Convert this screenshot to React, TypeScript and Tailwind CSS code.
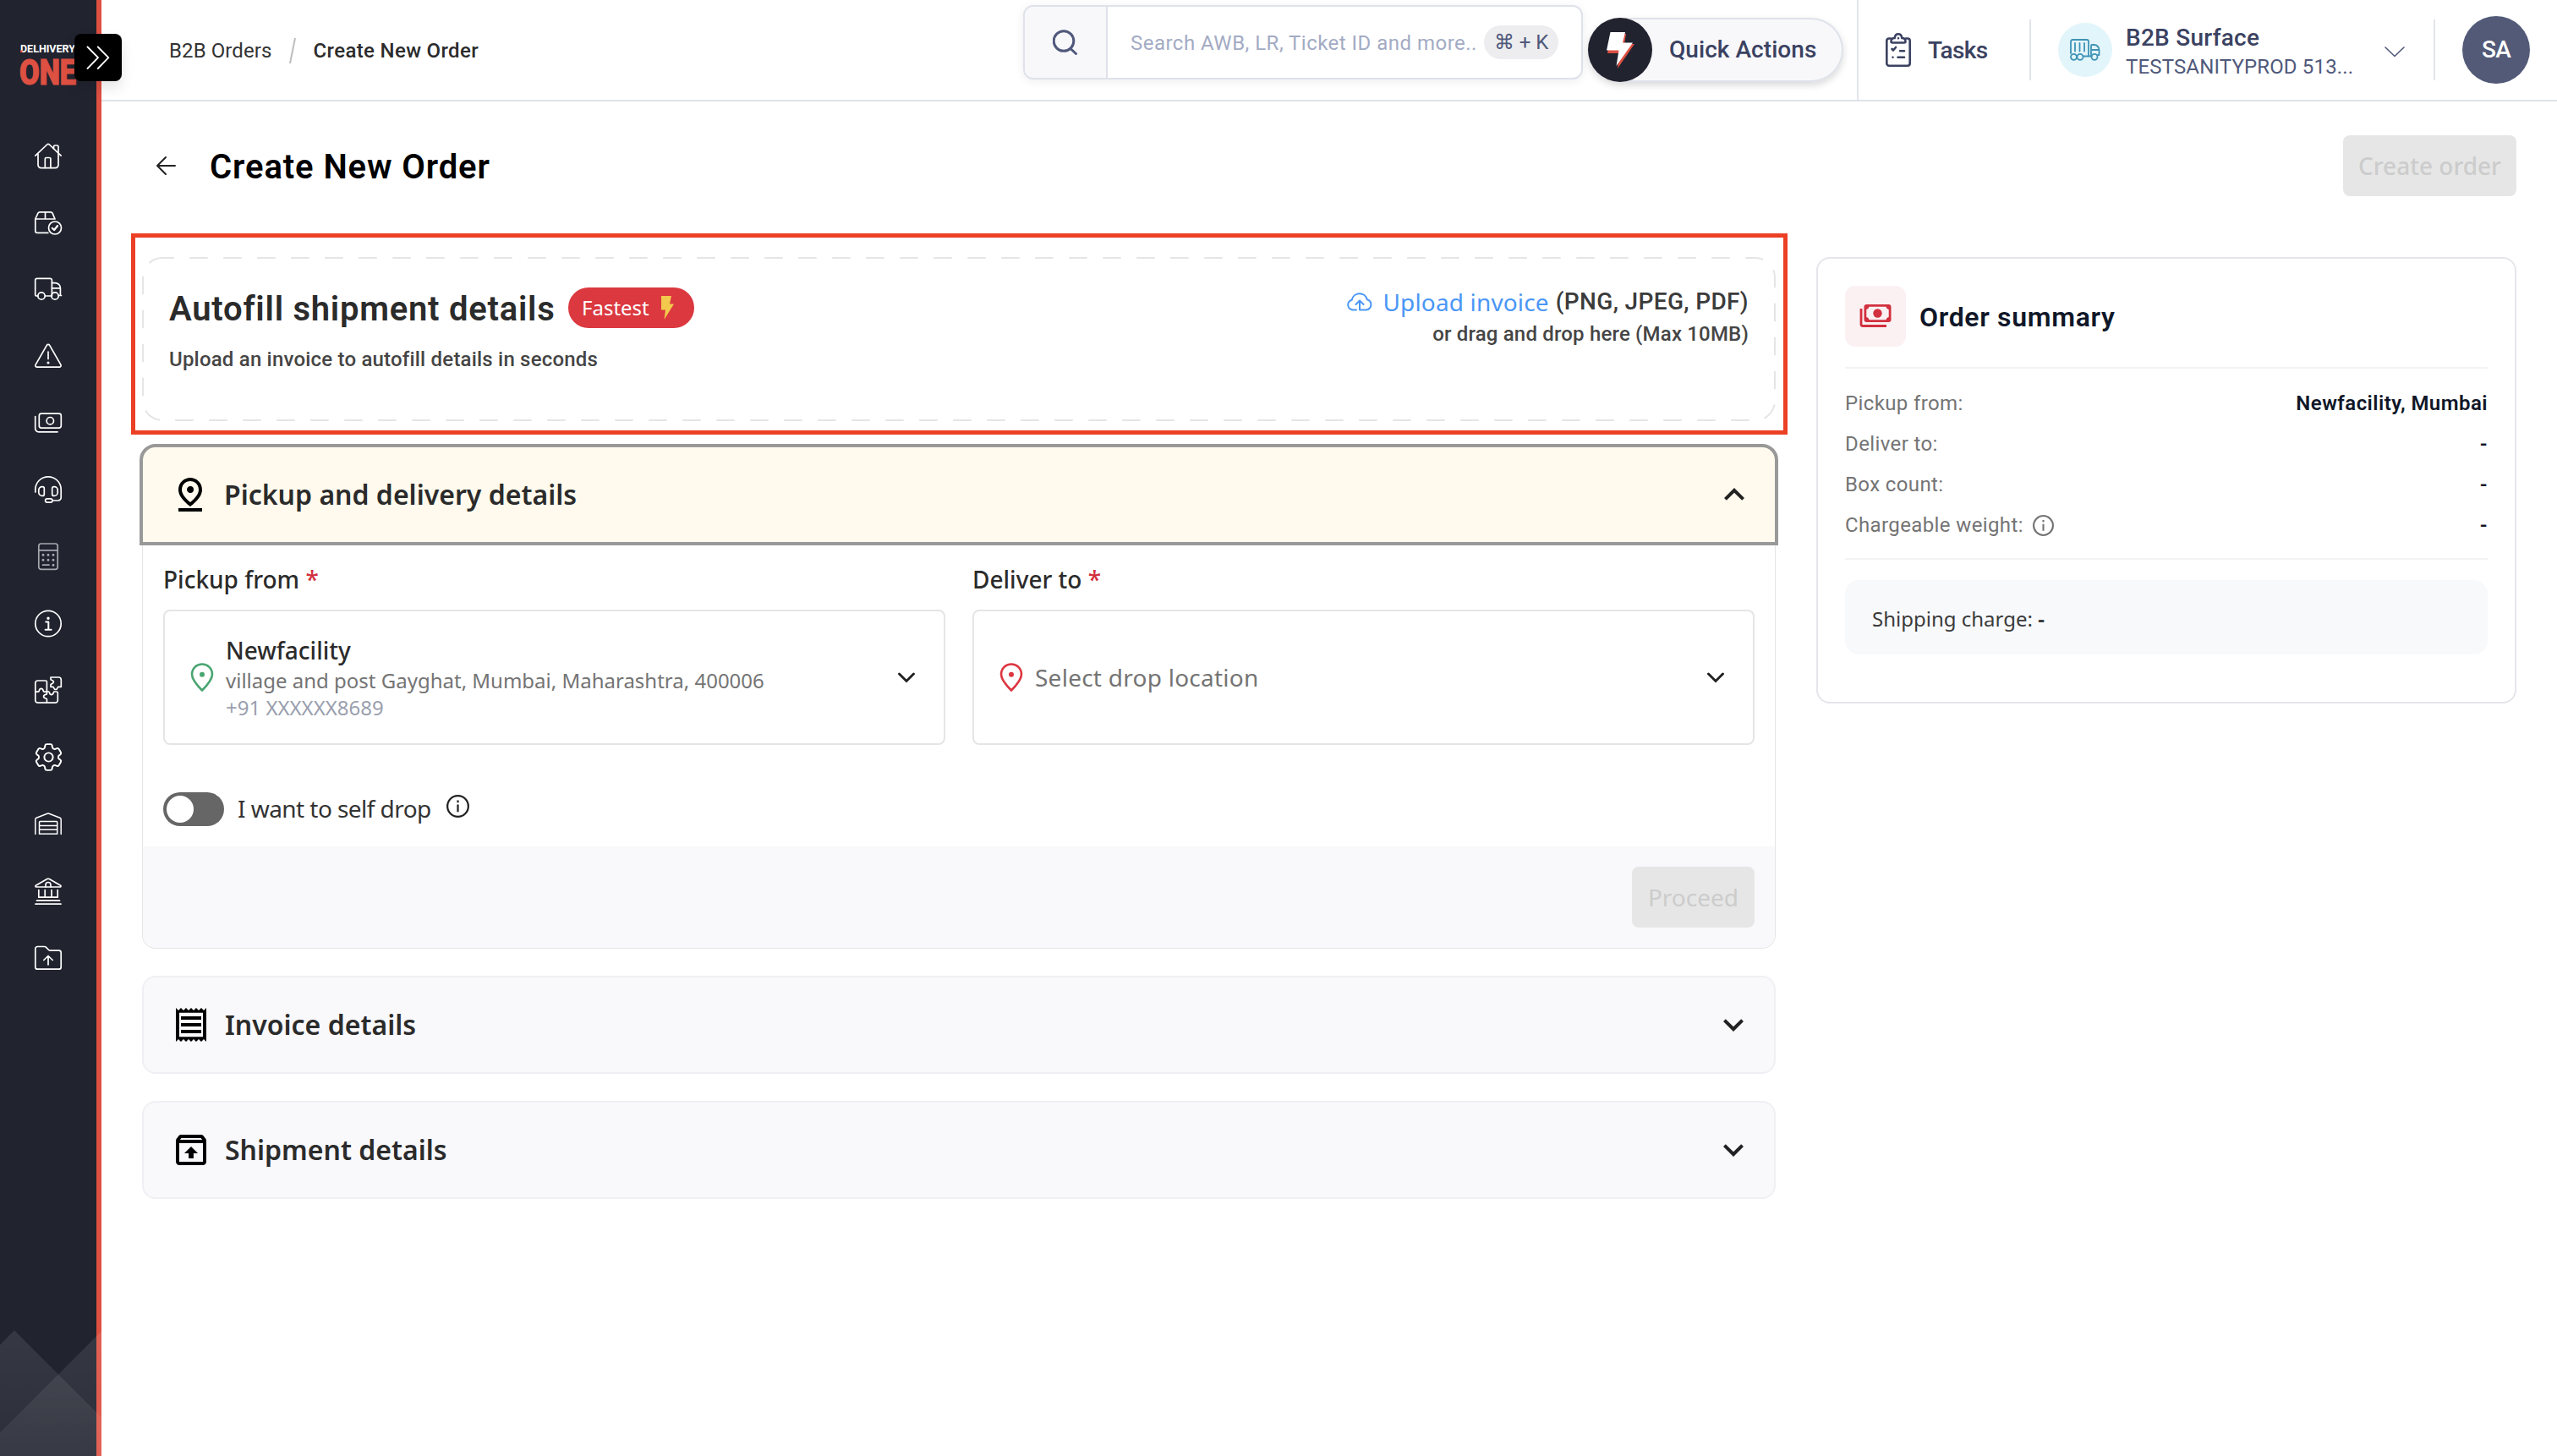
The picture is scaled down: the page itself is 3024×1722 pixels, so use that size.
import type { ReactNode } from "react";
import {
  MdExpandLess,
  MdExpandMore,
  MdOutlinePinDrop,
  MdOutlineReceipt,
  MdOutlineUnarchive,
} from "react-icons/md";
import { HiOutlineCog6Tooth } from "react-icons/hi2";

const roboto = "font-['Roboto','Noto_Sans',sans-serif]";

function NavIcon({ children, className = "text-white" }: { children: ReactNode; className?: string }) {
  return (
    <svg
      viewBox="0 0 32 32"
      className={`h-8 w-8 overflow-visible ${className}`}
      fill="none"
      stroke="currentColor"
      strokeWidth="1.7"
      strokeLinecap="round"
      strokeLinejoin="round"
    >
      {children}
    </svg>
  );
}

const navItems: ReactNode[] = [
  <NavIcon>
    <path d="M.8 16.2 14.6 3a2 2 0 0 1 2.8 0l13.8 13.2" />
    <path d="M4 14v13a3.6 3.6 0 0 0 3.6 3.6h16.8A3.6 3.6 0 0 0 28 27V13.5M28 13V5.5a1.5 1.5 0 0 0-1.500-1.500H24a1.500 1.500 0 0 0-1.500 1.500V8" />
    <path d="M12.300 30.500V20a1.500 1.500 0 0 1 1.500-1.500h3.600a1.500 1.500 0 0 1 1.500 1.500v10.500" />
  </NavIcon>,
  <NavIcon>
    <path d="M.8 12 3.900 5.200A2.400 2.400 0 0 1 6.100 3.800h12.800a2.400 2.400 0 0 1 2.200 1.400L24 12H.8ZM12.500 4v8" />
    <path d="M.8 12v14a2.400 2.400 0 0 0 2.400 2.400h12.600" />
    <circle cx="24" cy="22.500" r="7.500" />
    <path d="m20.800 22.800 2.300 2.200 4-5" strokeWidth="2.200" />
  </NavIcon>,
  <NavIcon>
    <path d="M4 24H2.500A1.800 1.800 0 0 1 .7 22.200V5.500a2.200 2.200 0 0 1 2.200-2.200h15.300a2.200 2.200 0 0 1 2.200 2.200V24h-8" />
    <path d="M20.400 8.600h3.800c3.500 0 6.200 2.700 6.200 6.200V23M20.400 14.800h10M28.300 23.500h3.200" />
    <circle cx="8" cy="24" r="4.200" />
    <circle cx="24" cy="24" r="4.200" />
  </NavIcon>,
  <NavIcon>
    <path d="M14.300 3.400 1.100 26.300A1.900 1.900 0 0 0 2.800 29.100h26.400a1.900 1.900 0 0 0 1.700-2.800L17.700 3.400a2 2 0 0 0-3.400 0Z" />
    <path d="M16 11v8.500" />
    <circle cx="16" cy="24" r=".7" fill="currentColor" />
  </NavIcon>,
  <NavIcon>
    <rect x="5.300" y="5.200" width="26" height="17" rx="2.600" />
    <circle cx="18.300" cy="13.700" r="4.200" />
    <path d="M.7 8.500v14.300a4 4 0 0 0 4 4H27" />
  </NavIcon>,
  <NavIcon>
    <path d="M.8 19V16a15.200 15.200 0 0 1 30.400 0v9.500a3.500 3.500 0 0 1-3.500 3.500H21" />
    <path d="M11.300 14.600v6.800a2 2 0 0 1-2 2H8.800a4 4 0 0 1-4-4v-2.800a4 4 0 0 1 4-4h.5a2 2 0 0 1 2 2ZM20.700 14.600v6.800a2 2 0 0 0 2 2h.5a4 4 0 0 0 4-4v-2.800a4 4 0 0 0-4-4h-.5a2 2 0 0 0-2 2Z" />
    <rect x="12.600" y="26.800" width="8.400" height="4.400" rx="2.200" />
  </NavIcon>,
  <NavIcon className="text-[#a8a9ae]">
    <rect x="4.800" y="1" width="22.400" height="30.400" rx="2.800" />
    <path d="M4.800 8.900h22.400M9.500 26.200H17" />
    <path d="M10 14.200h.01M16 14.200h.01M22 14.200h.01M10 20.200h.01M16 20.200h.01M22 20.200h.01M22 26.200h.01" strokeWidth="3" />
  </NavIcon>,
  <NavIcon>
    <circle cx="16" cy="16.500" r="15.200" />
    <path d="M13.200 14.500h3.100v9M12.600 23.700h7" strokeWidth="2" />
    <circle cx="16" cy="10.300" r=".9" fill="currentColor" />
  </NavIcon>,
  <NavIcon>
    <path d="M14.400 18V6.500a1.500 1.500 0 0 0-1.500-1.500H3.700A3 3 0 0 0 .8 8v20.200a3 3 0 0 0 3 3h20.500a3 3 0 0 0 3-3V19.500a1.500 1.500 0 0 0-1.500-1.500h-3c-.6 0-.4 3.600-3 3.600s-2.200-3.600-3-3.600h-2.400v2.700c0 1-3.800.4-3.800 3s3.800 2 3.800 3v4.300" />
    <path d="M.8 18.200h3.800c1 0 .2-3.800 3.100-3.800s2.200 3.800 3.200 3.800h3.500" />
    <path d="M19 1h9.300a3 3 0 0 1 3 3v8.300h-3.500c-.9 0-.3 3.200-3 3.200s-2-3.200-3-3.200H19V9.500c0-.8 3.400-.6 3.400-3S19 4.500 19 3.500Z" />
  </NavIcon>,
  <HiOutlineCog6Tooth className="-mx-[4.500px] -my-[4.500px] h-[41px] w-[41px] text-white [&_path]:[stroke-width:1.150]" />,
  <NavIcon>
    <path d="M.8 28.500V11.200a2 2 0 0 1 1.300-1.900L15 4.300a3 3 0 0 1 2 0l12.900 5a2 2 0 0 1 1.300 1.900v17.300" strokeWidth="1.500" />
    <path d="M5.500 28.300V14.500a1 1 0 0 1 1-1h19.200a1 1 0 0 1 1 1v13.800ZM5.500 18.400h21.200M5.500 23.300h21.200" strokeWidth="1.500" />
  </NavIcon>,
  <NavIcon>
    <path d="M1.800 11a1 1 0 0 1-.4-1.800L14.800 1.600a2.400 2.400 0 0 1 2.400 0l13.400 7.600a1 1 0 0 1-.4 1.800Z" />
    <path d="M13 11V8.500a3 3 0 0 1 6 0V11M4.800 14.500V23M12.200 14.500V23M20 14.500V23M27.200 14.500V23M4.800 23.200h22.400M2.500 27.200h27M1 31.200h30" />
  </NavIcon>,
  <NavIcon>
    <path d="M.8 26.700V5a2.500 2.500 0 0 1 2.500-2.500h8.300a2.500 2.500 0 0 1 1.700.7l3.300 3.300a2.500 2.500 0 0 0 1.700.7h10.400a2.500 2.500 0 0 1 2.500 2.500v17a2.500 2.500 0 0 1-2.500 2.500H3.300a2.500 2.500 0 0 1-2.500-2.500Z" />
    <path d="M16 24V13.500M10.800 18.500l5.200-5 5.200 5" />
  </NavIcon>,
];

function Sidebar() {
  return (
    <aside className="relative h-[1722px] w-[120px] shrink-0 border-r-[6px] border-[#dd5042] bg-[#21232f]">
      <svg className="ml-6 mt-[50px] block h-[52px] w-[68px] overflow-visible" viewBox="0 0 68 52">
        <text x="0" y="11.800" fontSize="13.500" fontWeight="700" fill="#fff" textLength="65" lengthAdjust="spacingAndGlyphs" fontFamily="Roboto, sans-serif">
          DELHIVERY
        </text>
        <rect x="0" y="9.500" width="2.500" height="2.500" fill="#dd5042" />
        <text x="-1" y="49.500" fontSize="42" fontWeight="900" fill="#dd5042" stroke="#dd5042" strokeWidth="1.200" textLength="67" lengthAdjust="spacingAndGlyphs" fontFamily="Roboto, sans-serif">
          ONE
        </text>
      </svg>
      <nav className="mt-[42px] flex flex-col items-center">
        {navItems.map((icon, i) => (
          <a key={i} className="flex h-[79.100px] items-center justify-center">
            {icon}
          </a>
        ))}
      </nav>
      {/* faint mountains at the foot of the bar */}
      <svg className="absolute bottom-0 left-0 h-[172px] w-[120px]" viewBox="0 0 120 172">
        <defs>
          <linearGradient id="fade" x1="0" y1="0" x2="0" y2="1">
            <stop offset="0" stopColor="#fff" stopOpacity=".095" />
            <stop offset="1" stopColor="#fff" stopOpacity=".05" />
          </linearGradient>
        </defs>
        <path d="M17 23.500 0 40.500V172h120V126.500Z" fill="url(#fade)" />
        <path d="M120 24.500 0 144.500V172h120Z" fill="url(#fade)" />
      </svg>
      <button className="absolute left-[88px] top-10 flex h-14 w-14 items-center justify-center rounded-lg bg-black shadow-[0_8px_16px_rgba(0,0,0,0.1)]">
        <svg viewBox="0 0 28 28" className="h-7 w-7" fill="none" stroke="#fff" strokeWidth="1.800" strokeLinecap="round" strokeLinejoin="round">
          <path d="M1.500 1.500 14 14.200 1.500 27M13.800 1.500l12.500 12.700L13.800 27" />
        </svg>
      </button>
    </aside>
  );
}

function Header() {
  return (
    <header className={`flex h-[120px] items-start border-b-2 border-[#dfe3e9] ${roboto}`}>
      <div className="flex h-[118px] w-[1090px] items-center pl-20 pt-0.5 text-2xl">
        <span className="tracking-[0.100px] text-[#333]">B2B Orders</span>
        <svg viewBox="0 0 8 30" className="ml-5 h-[30px] w-2" stroke="#bdbdbd" strokeWidth="2">
          <path d="M7 0 1 30" />
        </svg>
        <span className="ml-[21px] font-medium tracking-[0.350px] text-[#2b2b2b]">Create New Order</span>
      </div>

      <div className="mt-1.5 flex h-[88px] w-[662px] items-center overflow-hidden rounded-xl border-2 border-[#dfe2ea] bg-white shadow-[0_2px_12px_rgba(0,0,0,0.07)]">
        <div className="flex h-full w-[98px] items-center justify-center border-r-2 border-[#dfe2ea] bg-[#f8f8fb]">
          <svg viewBox="0 0 30 30" className="h-[30px] w-[30px]" fill="none" stroke="#50597b" strokeWidth="3" strokeLinecap="round">
            <circle cx="13" cy="13.500" r="11.800" />
            <path d="m21 22.500 6.500 6" />
          </svg>
        </div>
        <span className="ml-[27px] w-[418px] whitespace-nowrap pt-0.5 text-2xl tracking-[0.480px] text-[#a3abc4]">
          Search AWB, LR, Ticket ID and more..
        </span>
        <kbd className={`flex h-10 w-[88px] items-center justify-center rounded-[20px] bg-[#ededef] text-2xl text-[#50597b] ${roboto}`}>
          ⌘ + K
        </kbd>
      </div>

      <button className="ml-1.5 mt-[21px] flex h-[76px] w-[302px] items-center rounded-full bg-[#f8f8fb] text-[28px] font-medium text-[#3b4261] shadow-[inset_0_0_0_2px_#dfe2ea,0_4px_8px_rgba(0,0,0,0.15)]">
        <span className="flex h-[76px] w-[76px] items-center justify-center rounded-full bg-[#21232f]">
          <svg viewBox="0 0 34 44" className="h-11 w-[34px]">
            <path d="M7 3h17l-2 12h12L14 44l2-18H2z" fill="#dd5042" />
            <path d="M5.500 1h17.500l-3 12.500h12L12.500 41l3-18.500H1z" fill="#fff" />
          </svg>
        </span>
        <span className="ml-5 tracking-[0.050px]">Quick Actions</span>
      </button>

      <div className="ml-4 flex h-[118px] items-center border-l-2 border-[#e3e5eb]">
        <svg viewBox="0 0 30 40" className="ml-8 h-10 w-[30px]" fill="none" stroke="#3b4261" strokeWidth="2.600" strokeLinecap="round" strokeLinejoin="round">
          <path d="M6 6.500H4A2.700 2.700 0 0 0 1.300 9.200V36A2.700 2.700 0 0 0 4 38.700h22a2.700 2.700 0 0 0 2.700-2.700V9.200A2.700 2.700 0 0 0 26 6.500h-2" />
          <path d="M8 11.500a1.500 1.500 0 0 1-1.500-1.500c0-2.500 1.200-4 4.200-4C11 3 12.500 1.300 15 1.300S19 3 19.300 6c3 0 4.200 1.500 4.200 4a1.500 1.500 0 0 1-1.500 1.500Z" />
          <path d="M15 6.200v.01M7.500 19l1.500 1.500 3-3.500M17 21.300h5M8.500 28.800v.01M14.500 28.800H22" />
        </svg>
        <span className="ml-[20px] w-[120px] pt-0.5 text-[28px] font-medium tracking-[-0.650px] text-[#3b4261]">Tasks</span>
        <div className="flex h-[72px] w-[480px] items-center border-x-2 border-[#e3e5eb]">
          <span className="ml-8 flex h-16 w-16 items-center justify-center rounded-full bg-[#e2f5fa]">
            <svg viewBox="0 0 36 26" className="h-[26px] w-9" fill="none" stroke="#3f93b5" strokeWidth="1.800" strokeLinecap="round" strokeLinejoin="round">
              <path d="M1 17V3a2 2 0 0 1 2-2h17a2 2 0 0 1 2 2v16M6 5v9.500M11.500 5v9.500M17 5v9.500M25 19V8a1 1 0 0 1 1-1h2.500a6 6 0 0 1 6 6v6h-1.500M25 13h9.500M16 20.500h9.500" />
              <circle cx="4.500" cy="21.300" r="3.500" />
              <circle cx="12" cy="21.300" r="3.500" />
              <circle cx="29" cy="21.300" r="3.500" />
            </svg>
          </span>
          <div className="ml-4 w-[305px] whitespace-nowrap pt-1 leading-9">
            <div className="text-[28px] font-medium tracking-[0.250px] text-[#3b4261]">B2B Surface</div>
            <div className="text-2xl tracking-[0.150px] text-[#50597b]">TESTSANITYPROD 513...</div>
          </div>
          <svg viewBox="0 0 26 14" className="mt-1 h-3.5 w-[26px]" fill="none" stroke="#50597b" strokeWidth="1.600" strokeLinecap="round">
            <path d="m2 2 11 10.500L24 2" />
          </svg>
        </div>
        <span className="ml-8 flex h-20 w-20 items-center justify-center rounded-full bg-[#525a78] text-[28px] font-medium tracking-[-0.800px] text-white">
          SA
        </span>
      </div>
    </header>
  );
}

function PinIcon({ className }: { className: string }) {
  return (
    <svg viewBox="0 0 28 34" className={`h-[34px] w-7 shrink-0 ${className}`} fill="none" stroke="currentColor" strokeWidth="2.600" strokeLinejoin="round">
      <path d="M14 32.500C9 27.500 2 20 2 13.500 2 6.500 7.500 1.500 14 1.500s12 5 12 12C26 20 19 27.500 14 32.500Z" />
      <circle cx="14" cy="13.800" r="3" fill="currentColor" stroke="none" />
    </svg>
  );
}

function SmallChevron() {
  return (
    <svg viewBox="0 0 36 36" className="h-9 w-9 shrink-0" fill="none" stroke="#222" strokeWidth="3" strokeLinecap="round">
      <path d="m9.500 14 8.500 8.500L26.500 14" />
    </svg>
  );
}

function InfoIcon({ className }: { className: string }) {
  return (
    <svg viewBox="0 0 24 24" className={`shrink-0 ${className}`} fill="none" stroke="currentColor" strokeWidth="2">
      <circle cx="12" cy="12" r="11" />
      <path d="M12 10.300V18M12 5.800v2.400" />
    </svg>
  );
}

function DisabledButton({ children, className }: { children: ReactNode; className: string }) {
  return (
    <button disabled className={`h-[72px] rounded-lg bg-[#e6e6e6] text-[28px] text-[#ccc] ${className}`}>
      {children}
    </button>
  );
}

function AutofillCard() {
  return (
    <section className={`relative h-[194px] ${roboto}`}>
      <svg className="absolute inset-0 h-full w-full rounded-3xl">
        <rect width="100%" height="100%" rx="24" fill="none" stroke="#e5e5e5" strokeWidth="4" strokeDasharray="21.500 18.500" strokeDashoffset="7.800" />
      </svg>
      <div className="flex justify-between pl-8 pr-8 pt-9">
        <div>
          <div className="flex h-12 items-center">
            <h2 className="w-[472px] whitespace-nowrap pt-[3px] text-[40px] font-semibold leading-[48px] tracking-[0.750px] text-[#2b2b2b]">
              Autofill shipment details
            </h2>
            <span className="flex h-12 w-[149px] items-center rounded-full bg-[#db383f] pl-4 font-['Noto_Sans',sans-serif] text-2xl text-white">
              Fastest
              <svg viewBox="0 0 16 28" className="ml-[13px] h-7 w-4">
                <path d="M1 0h12l-2 9.500h5L4.500 28 6 16.500H1z" fill="#f2c94c" />
              </svg>
            </span>
          </div>
          <p className="mt-[21px] text-2xl font-medium tracking-[0.200px] text-[#454545]">
            Upload an invoice to autofill details in seconds
          </p>
        </div>
        <div className="-mt-[3px] text-right">
          <div className="flex h-10 items-center justify-end text-[28px] leading-10">
            <svg viewBox="0 0 30 24" className="h-6 w-[30px]" fill="none" stroke="#4a96f5" strokeWidth="2" strokeLinecap="round" strokeLinejoin="round">
              <path d="M11 21.500H7a6 6 0 0 1-1.300-11.800A9.300 9.300 0 0 1 23.800 9.200 6.300 6.300 0 0 1 23 21.500h-8V11M10.500 15l4.500-4.500 4.500 4.500" />
            </svg>
            <span className="ml-[12px] font-['Noto_Sans',sans-serif] tracking-[0.150px] text-[#4a96f5]">Upload invoice</span>
            <span className="ml-[8px] font-medium tracking-[0.350px] text-[#3b3b3b]">(PNG, JPEG, PDF)</span>
          </div>
          <div className="text-2xl font-medium leading-9 tracking-[0.180px] text-[#454545]">or drag and drop here (Max 10MB)</div>
        </div>
      </div>
      {/* highlight frame around the upload area */}
      <div className="pointer-events-none absolute -bottom-4 -left-[13px] -right-[14px] -top-7 border-[5px] border-[#eb4025]" />
    </section>
  );
}

function PickupCard() {
  return (
    <section className="mt-[30px]">
      <div className="relative flex h-[114px] items-center rounded-t-2xl bg-[#fffaed] pl-[33px] pr-[25px] outline-4 -outline-offset-1 outline-[#999]">
        <MdOutlinePinDrop className="h-12 w-12 text-black" />
        <h3 className="ml-4 text-[32px] font-semibold text-[#2b2b2b]">Pickup and delivery details</h3>
        <MdExpandLess className="ml-auto h-12 w-12 text-[#222]" />
      </div>
      <div className="overflow-hidden rounded-b-2xl border border-t-0 border-[#e5e5e5]">
        <div className="px-6 pt-[23px]">
          <div className="grid grid-cols-2 gap-8">
            <div>
              <label className="block text-[28px] font-medium leading-10 text-[#2b2b2b]">
                Pickup from <span className="text-[#d2303e]">*</span>
              </label>
              <div className="mt-4 flex h-40 items-center rounded-lg border-2 border-[#e5e5e5] pl-[30px] pr-[26px]">
                <PinIcon className="text-[#4aa571]" />
                <div className="ml-3.5 text-2xl">
                  <div className="text-[28px] font-medium leading-9 text-[#2b2b2b]">Newfacility</div>
                  <div className="leading-9 text-[#747474]">village and post Gayghat, Mumbai, Maharashtra, 400006</div>
                  <div className="leading-7 text-[#9a9fae]">+91 XXXXXX8689</div>
                </div>
                <div className="ml-auto">
                  <SmallChevron />
                </div>
              </div>
            </div>
            <div>
              <label className="block text-[28px] font-medium leading-10 text-[#2b2b2b]">
                Deliver to <span className="text-[#d2303e]">*</span>
              </label>
              <div className="mt-4 flex h-40 items-center rounded-lg border-2 border-[#e5e5e5] pl-[30px] pr-[26px]">
                <PinIcon className="text-[#dc3640]" />
                <div className="ml-3.5 text-[28px] tracking-[0.250px] text-[#747474]">Select drop location</div>
                <div className="ml-auto">
                  <SmallChevron />
                </div>
              </div>
            </div>
          </div>
          <div className="flex items-center pb-6 pt-14">
            <div className="flex h-10 w-[72px] items-center rounded-full bg-[#666] pl-1">
              <div className="h-8 w-8 rounded-full bg-white" />
            </div>
            <span className="-mt-0.5 ml-4 text-[28px] leading-10 tracking-[-0.550px] text-[#333]">I want to self drop</span>
            <InfoIcon className="-mt-2 ml-[18px] h-[27px] w-[27px] text-[#222]" />
          </div>
        </div>
        <div className="flex justify-end bg-[#f9f9fb] p-6">
          <DisabledButton className="w-[145px] font-[450]">Proceed</DisabledButton>
        </div>
      </div>
    </section>
  );
}

function ClosedCard({ icon, title }: { icon: ReactNode; title: string }) {
  return (
    <section className="mt-8 flex h-[116px] items-center rounded-2xl border-2 border-[#f0f0f4] bg-[#f9f9fb] pl-8 pr-6">
      {icon}
      <h3 className="ml-4 text-[32px] font-semibold text-[#2b2b2b]">{title}</h3>
      <MdExpandMore className="ml-auto h-12 w-12 text-[#222]" />
    </section>
  );
}

function SummaryCard() {
  const rows = [
    { label: "Pickup from:", value: "Newfacility, Mumbai" },
    { label: "Deliver to:", value: "-" },
    { label: "Box count:", value: "-" },
    { label: "Chargeable weight:", value: "-", info: true },
  ];

  return (
    <aside className={`h-[528px] w-[828px] rounded-2xl border-2 border-[#e5e6eb] p-8 ${roboto}`}>
      <div className="flex items-center gap-4 pb-6">
        <div className="flex h-[72px] w-[72px] items-center justify-center rounded-xl bg-[#fbf1f3]">
          <svg viewBox="0 0 38 28" className="h-7 w-[38px]">
            <path d="M2 5v18.500a2 2 0 0 0 2 2h28" fill="none" stroke="#d2303e" strokeWidth="2.800" />
            <rect x="5.500" y="0" width="32" height="21" rx="3" fill="#d2303e" />
            <path d="M11.500 2.800h20a4 4 0 0 0 3.200 3.200v9a4 4 0 0 0-3.200 3.200h-20A4 4 0 0 0 8.300 15V6a4 4 0 0 0 3.200-3.200Z" fill="#fbf1f3" />
            <circle cx="21.500" cy="10.500" r="5.200" fill="#d2303e" />
          </svg>
        </div>
        <h2 className="pt-px text-[32px] font-semibold tracking-[0.680px] text-[#101728]">Order summary</h2>
      </div>
      <div className="flex flex-col gap-4 border-y-2 border-[#f3f3f5] pb-[23px] pt-[25px] text-2xl leading-8">
        {rows.map((row) => (
          <div key={row.label} className="flex items-center justify-between">
            <span className="flex items-center tracking-[0.380px] text-[#747474]">
              {row.label}
              {row.info && <InfoIcon className="ml-[11px] h-[25px] w-[25px]" />}
            </span>
            <span className="font-semibold tracking-[0.450px] text-[#101728]">{row.value}</span>
          </div>
        ))}
      </div>
      <div className="mt-6 flex h-[88px] items-center rounded-2xl bg-[#f8f9fb] pl-8 pt-[3px] font-['Noto_Sans',sans-serif] text-2xl text-[#3b3b3b]">
        Shipping charge:&nbsp;<b className="font-bold">-</b>
      </div>
    </aside>
  );
}

export default function App() {
  return (
    <div className="flex h-[1722px] w-[3024px] overflow-hidden bg-white font-['Noto_Sans',sans-serif]">
      <Sidebar />
      <div className="flex-1">
        <Header />
        <main className="px-12">
          <div className="flex h-28 items-center pt-10">
            <svg viewBox="0 0 24 24" className="ml-4 h-6 w-6" fill="none" stroke="#222" strokeWidth="2" strokeLinecap="round" strokeLinejoin="round">
              <path d="M23 12H2M12 2 2 12l10 10" />
            </svg>
            <h1 className={`ml-10 pt-[3px] text-[40px] font-semibold tracking-[0.900px] text-black ${roboto}`}>Create New Order</h1>
            <DisabledButton className="ml-auto w-[205px] font-medium">Create order</DisabledButton>
          </div>
          <div className="mt-[72px] flex items-start gap-12">
            <div className="w-[1932px]">
              <AutofillCard />
              <PickupCard />
              <ClosedCard icon={<MdOutlineReceipt className="h-12 w-12 text-black" />} title="Invoice details" />
              <ClosedCard icon={<MdOutlineUnarchive className="h-12 w-12 text-black" />} title="Shipment details" />
            </div>
            <SummaryCard />
          </div>
        </main>
      </div>
    </div>
  );
}
